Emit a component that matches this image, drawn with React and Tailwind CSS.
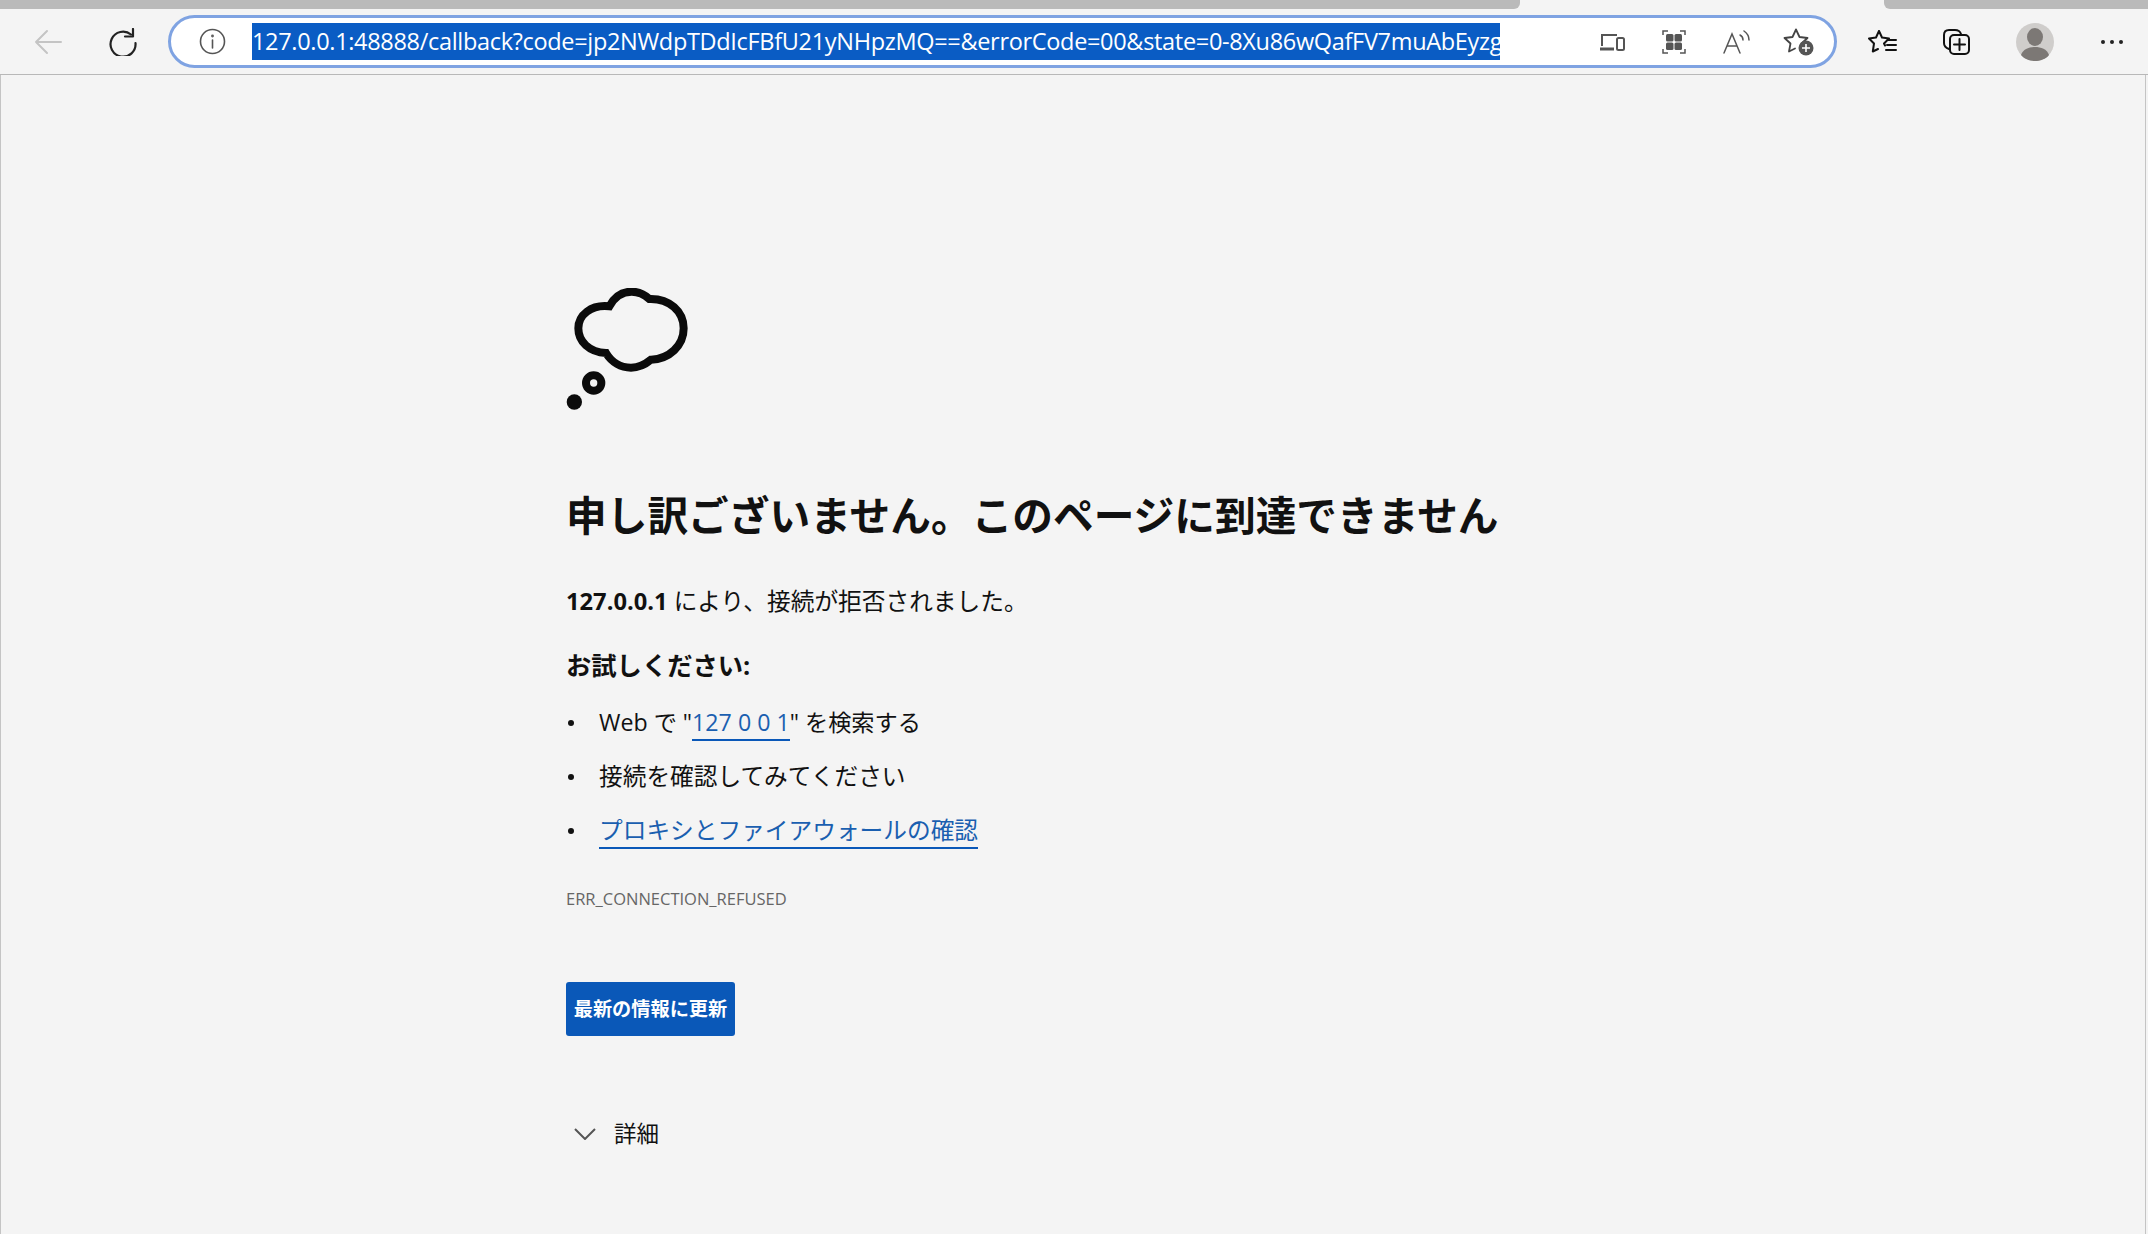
const Stroke = ({ children, w, h, vb, color = "#1a1a1a", sw = 2 }) => (
  <svg width={w} height={h} viewBox={vb} fill="none" stroke={color} strokeWidth={sw} strokeLinecap="round" strokeLinejoin="round">
    {children}
  </svg>
);

const BackIcon = () => (
  <Stroke w={28} h={28} vb="0 0 28 28" color="#c4c4c4">
    <path d="M2 14h25M13 3 2 14l11 11" />
  </Stroke>
);

const ReloadIcon = () => (
  <Stroke w={28} h={28} vb="0 0 28 28" color="#222222" sw={2.2}>
    <path d="M22 6.5A12.5 12.5 0 1 0 26.5 15" />
    <path d="M24 1v7.5h-8" />
  </Stroke>
);

const InfoIcon = () => (
  <Stroke w={27} h={27} vb="0 0 27 27" color="#555555" sw={1.6}>
    <circle cx="13.5" cy="13.5" r="12" />
    <path d="M13.5 12v8" />
    <circle cx="13.5" cy="8" r="0.6" />
  </Stroke>
);

const DevicesIcon = () => (
  <svg width={26} height={18} viewBox="0 0 26 18" fill="none" stroke="#555555" strokeWidth={2}>
    <path d="M3 13V2h15" />
    <path d="M1 16h14" strokeWidth={3} />
    <rect x="18" y="5" width="7" height="12" rx="1.5" />
  </svg>
);

const GridIcon = () => (
  <svg width={24} height={24} viewBox="0 0 24 24" fill="none" stroke="#555555" strokeWidth={1.5}>
    <path d="M1 5V1h5M18 1h5v4M23 19v4h-5M6 23H1v-4" />
    <g fill="#555555" stroke="none">
      <rect x="4" y="4" width="7.500" height="7.500" rx="1.500" />
      <rect x="12.500" y="4" width="7.500" height="7.500" rx="1.500" />
      <rect x="4" y="12.500" width="7.500" height="7.500" rx="1.500" />
      <rect x="12.500" y="12.500" width="7.500" height="7.500" rx="1.500" />
    </g>
  </svg>
);

const ReadIcon = () => (
  <svg width={28} height={24} viewBox="0 0 28 24" fill="none" stroke="#555555" strokeWidth={1.5} strokeLinecap="round">
    <path d="M1 23 9 4l8 19M4 16h10" />
    <path d="M17 5c2 1 3 3 3 5M21 1c3 2 5 5 5 9" />
  </svg>
);

const StarPlusIcon = () => (
  <svg width={31} height={29} viewBox="0 0 31 29" fill="none">
    <path d="M13 2.5 16.5 10l8 1-6 5.500 1 4M13 2.500 9.500 10l-8 1 6 5.500-1.500 8 6-3" stroke="#444444" strokeWidth={1.8} strokeLinejoin="round" strokeLinecap="round" />
    <circle cx="23" cy="21" r="7.500" fill="#555555" />
    <path d="M23 17v8M19 21h8" stroke="#ffffff" strokeWidth={1.600} />
  </svg>
);

const FavoritesIcon = () => (
  <Stroke w={29} h={26} vb="0 0 29 26" color="#111111" sw={2}>
    <path d="M11 2 14 8.500l7 1-5 5 1 2M11 2 8 8.500l-7 1 5 5-1.200 8L10 20" />
    <path d="M20 11h8M19 16h9M18 21h10" />
  </Stroke>
);

const CollectionsIcon = () => (
  <svg width={27} height={27} viewBox="0 0 27 27" fill="none" stroke="#111111" strokeWidth={2} strokeLinecap="round" strokeLinejoin="round">
    <path d="M6 21c-3-1-5-3-5-6V7c0-3 2-5 5-5h6c3 0 5 1 6 4" />
    <rect x="7" y="7" width="19" height="19" rx="4" />
    <path d="M16.500 11v11M11 16.500h11" />
  </svg>
);

const Avatar = () => (
  <svg width={38} height={38} viewBox="0 0 38 38">
    <circle cx="19" cy="19" r="19" fill="#cfcdcb" />
    <ellipse cx="19" cy="14" rx="8" ry="9" fill="#7c7875" />
    <path d="M5 32c2-6 8-8 14-8s12 2 14 8c-3 4-9 6-14 6S8 36 5 32Z" fill="#7c7875" />
  </svg>
);

const CloudIcon = () => (
  <svg width={125} height={125} viewBox="75 55 375 375" fill="none" stroke="#0b0b0b" strokeWidth={24}>
    <path d="M205 110C222 78 246 66 272 66C296 66 312 76 325 88C385 86 428 125 428 176C428 228 385 268 330 270C312 285 294 294 270 294C240 294 212 278 195 250C145 248 112 216 112 176C112 136 150 104 205 110Z" />
    <circle cx="158" cy="340" r="23" />
    <circle cx="100" cy="397" r="23" fill="#0b0b0b" stroke="none" />
  </svg>
);

const Bullet = ({ children }) => (
  <li className="flex items-center h-[34px]">
    <span className="w-[6px] h-[6px] rounded-full bg-[#111111] ml-[2px] mr-[25px]" />
    <span>{children}</span>
  </li>
);

const Link = ({ children }) => (
  <a className="text-[#1a5fb0] border-b-2 border-[#0a58b8] pb-[1px]">{children}</a>
);

export default function App() {
  return (
    <div className="w-[2148px] h-[1234px] overflow-hidden flex flex-col bg-[#f4f4f4] text-[#111111] font-['Open_Sans','Noto_Sans_CJK_JP',sans-serif]">
      <div className="h-[9px] flex bg-[#f4f4f4]">
        <div className="w-[1520px] bg-[#bababa] rounded-br-[6px]" />
        <div className="ml-[364px] flex-1 bg-[#bababa] rounded-bl-[6px]" />
      </div>

      <div className="h-[66px] flex items-center bg-[#f4f4f4] border-b border-[#b8b8b8]">
        <div className="ml-[34px]"><BackIcon /></div>
        <div className="ml-[47px]"><ReloadIcon /></div>
        <div className="ml-[31px] w-[1669px] h-[53px] rounded-full bg-white border-[3px] border-[#7fa3e2] flex items-center">
          <div className="ml-[28px]"><InfoIcon /></div>
          <span className="ml-[26px] w-[1248px] h-[37px] leading-[37px] bg-[#0a5cc4] text-white text-[23.5px] tracking-[-0.32px] whitespace-nowrap">
            127.0.0.1:48888/callback?code=jp2NWdpTDdIcFBfU21yNHpzMQ==&errorCode=00&state=0-8Xu86wQafFV7muAbEyzg
          </span>
          <div className="ml-[99px]"><DevicesIcon /></div>
          <div className="ml-[37px]"><GridIcon /></div>
          <div className="ml-[37px]"><ReadIcon /></div>
          <div className="ml-[32px]"><StarPlusIcon /></div>
        </div>
        <div className="ml-[31px]"><FavoritesIcon /></div>
        <div className="ml-[46px]"><CollectionsIcon /></div>
        <div className="ml-[46px]"><Avatar /></div>
        <div className="ml-[47px] flex gap-[5px]">
          <span className="w-[4px] h-[4px] rounded-full bg-[#222222]" />
          <span className="w-[4px] h-[4px] rounded-full bg-[#222222]" />
          <span className="w-[4px] h-[4px] rounded-full bg-[#222222]" />
        </div>
      </div>

      <main className="flex-1 mr-[2px] border-l border-r border-[#c4c4c4] pl-[565px] pt-[213px]">
        <CloudIcon />

        <h1 className="mt-[78px] text-[40.7px] leading-[48px] font-bold whitespace-nowrap">
          申し訳ございません。このページに到達できません
        </h1>

        <p className="mt-[45px] text-[23.7px] leading-[34px]">
          <b className="font-bold">127.0.0.1</b> により、接続が拒否されました。
        </p>

        <p className="mt-[30px] text-[25.3px] leading-[34px] font-bold">お試しください:</p>

        <ul className="mt-[24px] flex flex-col gap-[20px] text-[23.7px]">
          <Bullet><span className="text-[23.2px]">Web で "<Link>127 0 0 1</Link>" を検索する</span></Bullet>
          <Bullet>接続を確認してみてください</Bullet>
          <Bullet><Link>プロキシとファイアウォールの確認</Link></Bullet>
        </ul>

        <p className="mt-[39px] text-[16.500px] leading-[24px] text-[#666666]">ERR_CONNECTION_REFUSED</p>

        <button className="mt-[71px] block w-[169px] h-[54px] rounded-[3px] bg-[#0a58b8] text-white text-[19.200px] font-bold">
          最新の情報に更新
        </button>

        <div className="mt-[81px] flex items-center h-[34px] text-[22.500px]">
          <svg width={22} height={12} viewBox="0 0 22 12" fill="none" stroke="#555555" strokeWidth={2} className="ml-[8px]">
            <path d="M1 1l10 10L21 1" />
          </svg>
          <span className="ml-[18px]">詳細</span>
        </div>
      </main>
    </div>
  );
}
